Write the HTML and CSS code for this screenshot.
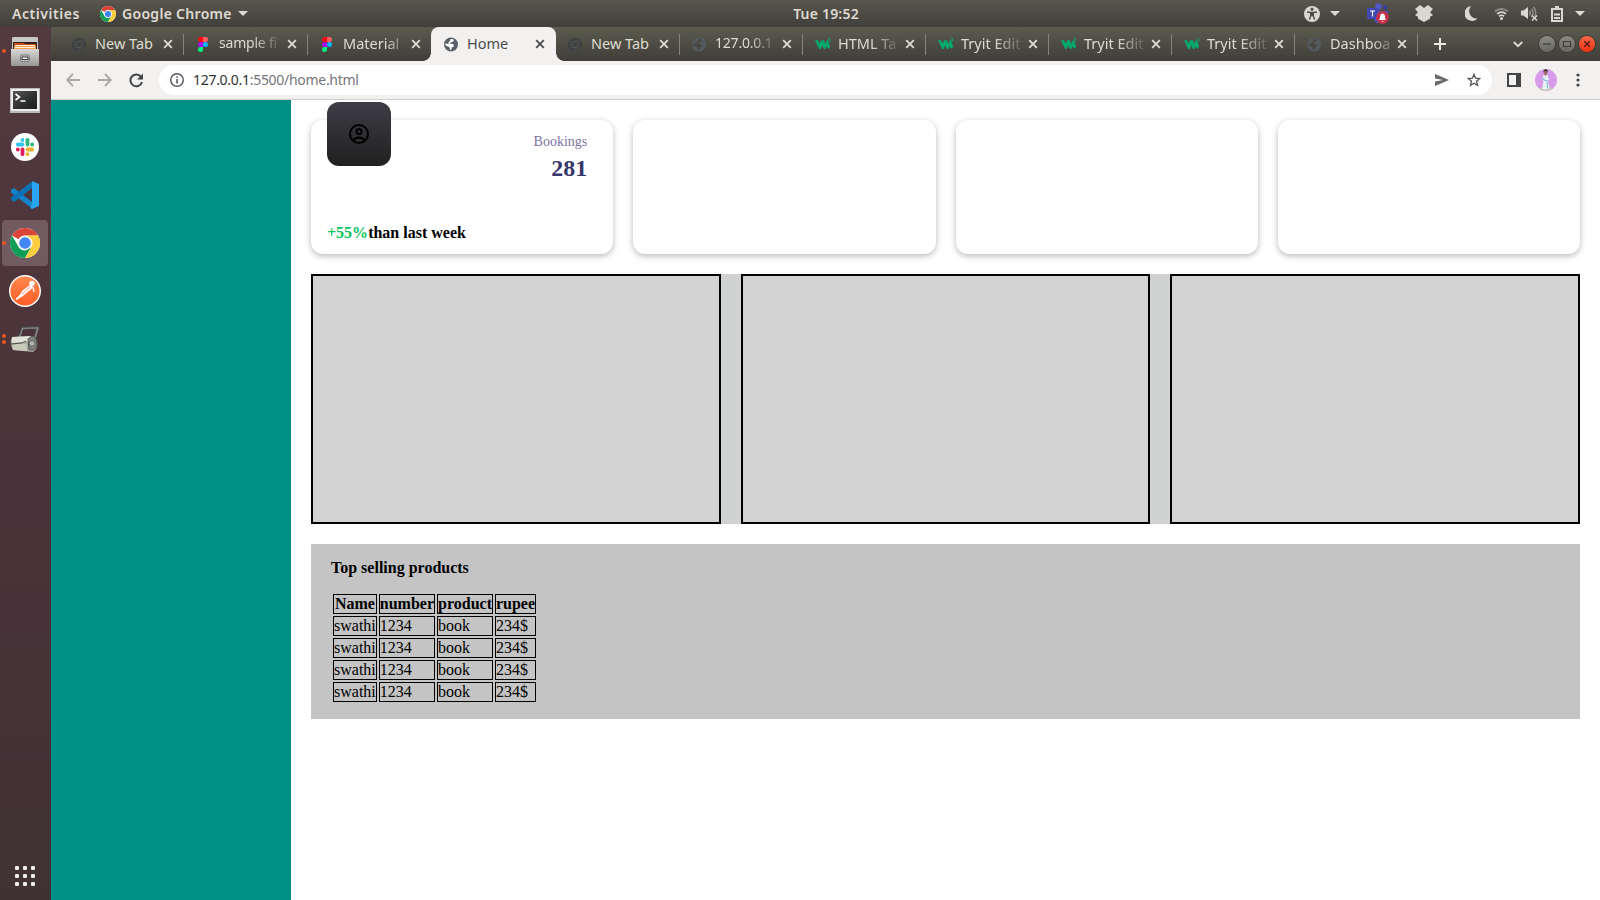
FILE: index.html
```html
<!DOCTYPE html>
<html lang="en">
<head>
<meta charset="utf-8">
<title>Home</title>
<link rel="stylesheet" href="styles.css">
</head>
<body>
<svg class="defs" aria-hidden="true">
  <defs>
    <linearGradient id="metal" x1="0" y1="0" x2="0" y2="1"><stop offset="0" stop-color="#d8d8d6"/><stop offset="1" stop-color="#969694"/></linearGradient>
    <linearGradient id="screen" x1="0" y1="0" x2="1" y2="1"><stop offset="0" stop-color="#555"/><stop offset=".6" stop-color="#2c2e2e"/><stop offset="1" stop-color="#1d1f1f"/></linearGradient>
    <linearGradient id="orange" x1="0" y1="0" x2="0" y2="1"><stop offset="0" stop-color="#ff8a50"/><stop offset="1" stop-color="#ff5c26"/></linearGradient>
  </defs>
  <symbol id="chrome" viewBox="0 0 48 48">
    <circle cx="24" cy="24" r="24" fill="#fff"/>
    <path fill="#db4437" d="M24 0A24 24 0 0 1 44.8 12H24A12 12 0 0 0 13.6 18L3.2 12A24 24 0 0 1 24 0Z"/>
    <path fill="#0f9d58" d="M3.2 12L13.6 30A12 12 0 0 0 24 36L34.4 30L24 48A24 24 0 0 1 3.2 12Z"/>
    <path fill="#ffcd40" d="M44.8 12A24 24 0 0 1 24 48L34.4 30A12 12 0 0 0 34.4 18L24 12Z"/>
    <circle cx="24" cy="24" r="11.5" fill="#f1f1f1"/><circle cx="24" cy="24" r="9.2" fill="#4285f4"/>
  </symbol>
  <symbol id="chrome-dim" viewBox="0 0 14 14">
    <circle cx="7" cy="7" r="7" fill="#3f4244"/>
    <path d="M7 3.8h6M4.2 8.6L1.3 3.5M9.8 8.6L7 13.6" stroke="#53534b" stroke-width=".9"/><circle cx="7" cy="7" r="3.2" fill="#3f4244" stroke="#55554c" stroke-width="1"/>
  </symbol>
  <symbol id="figma" viewBox="0 0 10 15">
    <path fill="#ff0a12" d="M5 0H2.5a2.5 2.5 0 0 0 0 5H5z"/><path fill="#ff5d63" d="M5 0h2.5a2.5 2.5 0 0 1 0 5H5z"/>
    <path fill="#a50cff" d="M5 5H2.5a2.5 2.5 0 0 0 0 5H5z"/><circle cx="7.5" cy="7.5" r="2.5" fill="#00b6ff"/><path fill="#00f27c" d="M5 10H2.5A2.5 2.5 0 1 0 5 12.500z"/>
  </symbol>
  <symbol id="globe" viewBox="0 0 14 14">
    <circle cx="7" cy="7" r="7" fill="currentColor"/>
    <path class="land" d="M6.500 1.500L9.500 1.800L9.800 3.300L8 4.800L6.200 5L6.200 6.300L8.800 6.400L10 7.800L9.300 9.400L7.700 9.800L7.500 12L5.600 12.400L6 10.600L4.500 9.200L1.400 7.700L1.300 6L4.600 6.600L4.500 4.600L6 3.600Z"/>
  </symbol>
  <symbol id="w3" viewBox="0 0 17 12">
    <path d="M0 2.200h3l1.500 3.600L6.200 2.200h2.600l1.500 3.600L12 2.200h1.500l-.4 2.300c1.200.7 1.200 2.400 2 3.300l-.8 2.800c-1.400 0-2.300-.9-2.700-2.300L10.400 11H9L7.300 7.500 5.600 11H4.200z" fill="#04aa6d"/>
    <path d="M12.800.7h2.300L13.800 2.200c1.700.1 1.500 2.300-.9 1.900" fill="none" stroke="#04aa6d" stroke-width=".8"/>
  </symbol>
  <symbol id="close" viewBox="0 0 10 10"><path d="M1.200 1.200L8.800 8.800M8.800 1.200L1.200 8.800" stroke="currentColor" stroke-width="1.800"/></symbol>
  <symbol id="caret" viewBox="0 0 10 5"><path d="M0 0h10L5 5z" fill="currentColor"/></symbol>
</svg>

<header class="topbar">
  <span class="activities">Activities</span>
  <svg class="app-logo"><use href="#chrome"/></svg>
  <span class="app-name">Google Chrome</span>
  <svg class="caret"><use href="#caret"/></svg>
  <span class="clock">Tue 19:52</span>
  <div class="tray">
    <svg width="16" height="16" viewBox="0 0 16 16"><circle cx="8" cy="8" r="8" fill="#dad7d1"/><circle cx="8" cy="3.200" r="1.500" fill="#4a4943"/><path d="M3 6l3.500.5h3L13 6M6.800 7v3L5.300 13.500M9.200 7v3l1.500 3.500" fill="none" stroke="#4a4943" stroke-width="1.300"/><path d="M6.300 6h3.400v4H6.300z" fill="#4a4943"/></svg>
    <svg class="caret c1"><use href="#caret"/></svg>
    <svg class="teams" width="22" height="21" viewBox="0 0 22 21"><circle cx="11.500" cy="3.500" r="3.300" fill="#5059c9"/><circle cx="18.300" cy="4.500" r="2.300" fill="#353f9e"/><path d="M6 8h15v6l-5 6H9l-3-5z" fill="#4952bd"/><rect y="5" width="11" height="11" rx="1" fill="#4048b4"/><path d="M3 8h5M5.500 8v5.500" stroke="#fff" stroke-width="1.200"/><circle cx="15.500" cy="14.500" r="6.500" fill="#c4314b"/><path d="M12 17c1.300-1.400.8-3.500 1.300-4.800a2.300 2.300 0 0 1 4.400 0c.5 1.300 0 3.400 1.300 4.800zM14.300 18h2.400l-1.200 1z" fill="#fff"/></svg>
    <svg class="dropbox" width="18" height="17" viewBox="0 0 18 17"><path fill="#dad7d1" d="M5 0L9 3l4-3 5 4-3 3.300 3 3-3 1.500v2L9 17l-6-3.200v-2L0 10.300l3-3L0 4z"/></svg>
    <svg class="moon" width="13" height="15" viewBox="0 0 13 15"><path fill="#dad7d1" d="M6 0a7.500 7.500 0 1 0 6.500 12.500A7.600 7.600 0 0 1 6 0z"/></svg>
    <svg class="wifi" width="15" height="13" viewBox="0 0 15 13"><path d="M1 4.500a9.500 9.500 0 0 1 13 0" fill="none" stroke="#8e8b85" stroke-width="1.900"/><path d="M3 7a6.500 6.500 0 0 1 9 0M5 9.300a3.500 3.500 0 0 1 5 0" fill="none" stroke="#dad7d1" stroke-width="1.700"/><circle cx="7.500" cy="11.500" r="1.500" fill="#dad7d1"/></svg>
    <svg class="sound" width="17" height="15" viewBox="0 0 17 15"><path d="M0 4.500h2.500L7 1v12L2.500 9.500H0z" fill="#dad7d1"/><path d="M8.500 4.500q1.500 2.500 0 5M10.500 3q3 4 0 8M12.500 1q3.500 4.500 1.500 9" fill="none" stroke="#918e88" stroke-width="1.500"/><path d="M11 9.500l5 5M16 9.500l-5 5" stroke="#dad7d1" stroke-width="1.600"/></svg>
    <svg class="battery" width="12" height="16" viewBox="0 0 12 16"><path d="M4 0h4v2h4v14H0V2h4z" fill="#dad7d1"/><path d="M2 4h8v10H2z" fill="#4a4943"/><path d="M3 8.500h6M3 12h6" stroke="#dad7d1" stroke-width="1.800"/></svg>
    <svg class="caret c2"><use href="#caret"/></svg>
  </div>
</header>

<div class="desktop">
  <nav class="dock">
    <div class="app"><i class="dots"><b></b></i>
      <svg width="28" height="29" viewBox="0 0 28 29"><path d="M1 1q0-1 2-1h22q2 0 2 1v12H1z" fill="#c8c8c6"/><path d="M2 5h24v8H2z" fill="#30201c"/><path d="M3 6h10l1 1h11v6H3z" fill="#c94e19"/><path d="M3 9h22v4H3z" fill="#f5a04e"/><path d="M4 8.500h20M4 10.500h20" stroke="#fff1d8"/><path d="M0 12h28v16q0 1-1 1H1q-1 0-1-1z" fill="url(#metal)"/><rect x="9.500" y="18" width="9" height="6.500" rx="1.500" fill="#ccc" stroke="#777"/><rect x="11" y="20" width="6" height="2.500" fill="#fff" stroke="#333"/></svg></div>
    <div class="app terminal">
      <svg width="30" height="25" viewBox="0 0 30 25"><path d="M0 0h30v25H0z" fill="#b9bab8"/><path d="M1 1h28v22H1z" fill="#eeeeec"/><path d="M3 3h24v18H3z" fill="url(#screen)"/><path d="M5.500 6l4 3-4 3M10.500 13h5" fill="none" stroke="#fff" stroke-width="1.600"/></svg></div>
    <div class="app">
      <svg width="28" height="28" viewBox="0 0 28 28"><circle cx="14" cy="14" r="14" fill="#fff"/><g stroke-width="3.800" stroke-linecap="round"><path d="M6.800 11.500h4.700M11.500 6.900v.1" stroke="#36c5f0"/><path d="M16.500 6.800v4.700M21.100 11.500h.1" stroke="#2eb67d"/><path d="M16.500 16.500h4.700M16.500 21.100v.1" stroke="#ecb22e"/><path d="M11.500 16.500v4.700M6.800 16.500h.1" stroke="#e01e5a"/></g></svg></div>
    <div class="app">
      <svg width="28" height="28" viewBox="0 0 28 28"><path d="M0 9l3-2 18 14v6.500L0 11.500z" fill="#1283c8"/><path d="M0 19l3 2L21 7V.5L0 16.500z" fill="#0d72b5"/><path d="M21 0l7 3v22l-7 3-1.500-1L21 21V7z" fill="#2aa5f3"/></svg></div>
    <div class="app"><span class="tile"></span><i class="dots"><b></b></i><svg width="30" height="30"><use href="#chrome"/></svg></div>
    <div class="app">
      <svg width="32" height="32" viewBox="0 0 32 32"><circle cx="16" cy="16" r="15.300" fill="url(#orange)" stroke="#fff" stroke-width="1.400"/><circle cx="23" cy="8.500" r="2.700" fill="#fff"/><path d="M22 10L14 16l-2.500 4L7 24.500l6-3.500 4-3.500 6-5zM24 12l1 5" fill="#fff" stroke="#fff" stroke-width="1.300"/><path d="M21 12l-8 7" stroke="#ff7340" stroke-width=".8"/></svg></div>
    <div class="app"><i class="dots"><b></b><b></b></i>
      <svg width="30" height="27" viewBox="0 0 30 27"><path d="M9 12L12.500 2L28 1.500L24 15" fill="none" stroke="#85898a" stroke-width="1.800"/><path d="M8 12L11.500 1.200L29 .7" fill="none" stroke="#3c403d" stroke-width="1"/><path d="M2 11l22-1q5 6 2 13l-3 3-20-2q-4-7-1-13z" fill="#a5a79f"/><path d="M2 11l19-1 2 5-21 2z" fill="#e2e3d7"/><path d="M2 19l11-2 4 2v6L3 24z" fill="#c9cbb9"/><path d="M1 18l11-1 4-2" fill="none" stroke="#4d504b"/><path d="M18 13q2-3 6-2.500 4 4 3 9-3 6-8 4z" fill="#80837e" stroke="#555"/><circle cx="22" cy="17.500" r="2.800" fill="#b4b6b1" stroke="#666"/></svg></div>
    <div class="all-apps"><b></b><b></b><b></b><b></b><b></b><b></b><b></b><b></b><b></b></div>
  </nav>

  <div class="browser">
    <div class="tabs">
      <div class="tab"><svg class="fav"><use href="#chrome-dim"/></svg><span class="label">New Tab</span><svg class="x"><use href="#close"/></svg></div>
      <div class="tab"><svg class="fav"><use href="#figma"/></svg><span class="label fade tight">sample fi</span><svg class="x"><use href="#close"/></svg></div>
      <div class="tab last"><svg class="fav"><use href="#figma"/></svg><span class="label fade soft">Material</span><svg class="x"><use href="#close"/></svg></div>
      <div class="tab active"><svg class="fav"><use href="#globe"/></svg><span class="label">Home</span><svg class="x"><use href="#close"/></svg></div>
      <div class="tab"><svg class="fav"><use href="#chrome-dim"/></svg><span class="label">New Tab</span><svg class="x"><use href="#close"/></svg></div>
      <div class="tab narrow"><svg class="fav dim"><use href="#globe"/></svg><span class="label fade tight">127.0.0.1</span><svg class="x"><use href="#close"/></svg></div>
      <div class="tab narrow"><svg class="fav w3"><use href="#w3"/></svg><span class="label fade">HTML Ta</span><svg class="x"><use href="#close"/></svg></div>
      <div class="tab narrow"><svg class="fav w3"><use href="#w3"/></svg><span class="label fade">Tryit Edit</span><svg class="x"><use href="#close"/></svg></div>
      <div class="tab narrow"><svg class="fav w3"><use href="#w3"/></svg><span class="label fade">Tryit Edit</span><svg class="x"><use href="#close"/></svg></div>
      <div class="tab narrow"><svg class="fav w3"><use href="#w3"/></svg><span class="label fade">Tryit Edit</span><svg class="x"><use href="#close"/></svg></div>
      <div class="tab narrow"><svg class="fav dim"><use href="#globe"/></svg><span class="label fade soft">Dashboa</span><svg class="x"><use href="#close"/></svg></div>
      <svg class="plus" width="12" height="12" viewBox="0 0 12 12"><path d="M6 0v12M0 6h12" stroke="#e8e7e0" stroke-width="2"/></svg>
      <div class="window-controls">
        <svg width="10" height="7" viewBox="0 0 10 7"><path d="M.8 1L5 5.200 9.200 1" fill="none" stroke="#dfdbd2" stroke-width="1.800"/></svg>
        <span class="win first"><svg viewBox="0 0 16 16"><path d="M4 8h8" stroke="#3c3b37" stroke-width="1.200"/></svg></span>
        <span class="win"><svg viewBox="0 0 16 16"><path d="M4.500 5.500h7v5h-7z" fill="none" stroke="#3c3b37" stroke-width="1.200"/></svg></span>
        <span class="win red"><svg viewBox="0 0 16 16"><path d="M5.200 5.200l5.600 5.600M10.800 5.200l-5.600 5.600" stroke="#4a1a10" stroke-width="1.300"/></svg></span>
      </div>
    </div>

    <div class="toolbar">
      <svg width="14" height="14" viewBox="0 0 14 14"><path d="M14 7H1.500M7 1L1.200 7 7 13" fill="none" stroke="#a9a8a6" stroke-width="1.800"/></svg>
      <svg class="fwd" width="14" height="14" viewBox="0 0 14 14"><path d="M0 7h12.500M7 1l5.800 6L7 13" fill="none" stroke="#a9a8a6" stroke-width="1.800"/></svg>
      <svg class="reload" width="15" height="15" viewBox="0 0 15 15"><path d="M12.300 4.200A5.900 5.900 0 1 0 13 9" fill="none" stroke="#444" stroke-width="2"/><path d="M14 .5v6H8z" fill="#444"/></svg>
      <div class="omnibox">
        <svg width="14" height="14" viewBox="0 0 14 14"><circle cx="7" cy="7" r="6.300" fill="none" stroke="#55585c" stroke-width="1.400"/><path d="M7 6v4.500M7 3.200v1.600" stroke="#55585c" stroke-width="1.600"/></svg>
        <span class="url"><span class="host">127.0.0.1</span>:5500/home.html</span>
        <svg class="send" width="14" height="12" viewBox="0 0 14 12"><path d="M0 0l14 6-14 6V7.500L8 6 0 4.500z" fill="#66686b"/></svg>
        <svg class="star" width="14" height="14" viewBox="0 0 14 14"><path d="M7 1.500l1.600 3.700 4 .4-3 2.700.9 4L7 10.200l-3.500 2.100.9-4-3-2.700 4-.4z" fill="none" stroke="#55585c" stroke-width="1.400"/></svg>
      </div>
      <svg class="side" width="14" height="14" viewBox="0 0 14 14"><path d="M1 1h12v12H1z" fill="none" stroke="#444" stroke-width="2"/><path d="M9 1h4v12H9z" fill="#444"/></svg>
      <svg class="avatar" width="22" height="22" viewBox="0 0 22 22"><circle cx="11" cy="11" r="11" fill="#d79bea"/><path d="M4 19.500q7-4 14 0-7 5-14 0z" fill="#c9bfae"/><path d="M8.500 6l-1 5 1 1-1.500 8q4 1.500 8 0L13 12l1-2-1.500-4z" fill="#e5f1f6"/><path d="M8 9l1 2 4 1M12 13l1 7" stroke="#7bb2c9" fill="none"/><path d="M9.500 4h2v2.500h-2z" fill="#9b675c"/><circle cx="10.500" cy="3" r="1.700" fill="#9b675c"/><path d="M8.500 4q-.5-3.800 2.300-3.800T12.500 4l-.6-2H9.500z" fill="#332"/></svg>
      <svg class="menu" width="4" height="14" viewBox="0 0 4 14"><g fill="#444"><circle cx="2" cy="2" r="1.600"/><circle cx="2" cy="7" r="1.600"/><circle cx="2" cy="12" r="1.600"/></g></svg>
    </div>

    <div class="page">
      <aside class="sidebar"></aside>
      <main class="content">
        <section class="cards">
          <article class="card">
            <div class="badge"><svg width="24" height="24" viewBox="0 0 24 24" fill="none" stroke="#000" stroke-width="2"><circle cx="12" cy="12" r="9"/><circle cx="12" cy="9.500" r="2.500"/><path d="M6 18.500q2.500-3 6-3t6 3"/></svg></div>
            <div class="stat"><span class="stat-name">Bookings</span><span class="stat-value">281</span></div>
            <p class="trend"><span class="up">+55%</span>than last week</p>
          </article>
          <article class="card"></article>
          <article class="card"></article>
          <article class="card"></article>
        </section>
        <section class="panels"><div class="panel"></div><div class="panel"></div><div class="panel"></div></section>
        <section class="products">
          <h4>Top selling products</h4>
          <table>
            <tr><th>Name</th><th>number</th><th>product</th><th>rupee</th></tr>
            <tr><td>swathi</td><td>1234</td><td>book</td><td>234$</td></tr>
            <tr><td>swathi</td><td>1234</td><td>book</td><td>234$</td></tr>
            <tr><td>swathi</td><td>1234</td><td>book</td><td>234$</td></tr>
            <tr><td>swathi</td><td>1234</td><td>book</td><td>234$</td></tr>
          </table>
        </section>
      </main>
    </div>
  </div>
</div>
</body>
</html>
```

FILE: styles.css
```css
* { box-sizing: border-box; }
body { margin: 0; width: 1600px; height: 900px; overflow: hidden; font-family: "Noto Sans", "Open Sans", sans-serif; background: #fff; }
svg { display: block; flex: none; }
.defs { position: absolute; width: 0; height: 0; }

.topbar { position: relative; height: 27px; display: flex; align-items: center; padding-left: 12px; background: linear-gradient(#5a564e, #403f3a); color: #dfdbd2; font-size: 14px; font-weight: 600; white-space: nowrap; }
.topbar span { line-height: 19px; padding-bottom: 1px; }
.activities { width: 88px; letter-spacing: .55px; }
.app-logo { width: 16px; height: 16px; }
.app-name { width: 110px; margin-left: 6px; letter-spacing: .3px; }
.caret { width: 10px; height: 5px; color: #dfdbd2; margin-left: 6px; }
.clock { position: absolute; left: 0; right: 0; padding-left: 52px; text-align: center; letter-spacing: .2px; }
.tray { margin-left: auto; display: flex; align-items: center; padding-right: 15px; }
.tray .c1 { margin-left: 10px; }
.teams { margin-left: 27px; }
.dropbox { margin-left: 26px; }
.moon { margin-left: 32px; }
.wifi { margin-left: 16px; }
.sound { margin-left: 12px; }
.battery { margin-left: 13px; }
.tray .c2 { margin-left: 12px; }

.desktop { display: flex; height: 873px; }
.dock { width: 51px; display: flex; flex-direction: column; background: linear-gradient(#533940, #4b333a 45%, #3f3134); }
.app { position: relative; height: 48px; display: flex; align-items: center; justify-content: center; padding-right: 1px; }
.app.terminal { padding-top: 2px; }
.app svg { position: relative; }
.tile { position: absolute; left: 2px; top: 1px; width: 46px; height: 46px; border-radius: 4px; background: #715b61; }
.dots { position: absolute; left: 2px; top: 0; height: 48px; display: flex; flex-direction: column; justify-content: center; gap: 2px; }
.dots b { width: 4px; height: 4px; border-radius: 50%; background: #e95420; }
.all-apps { margin: auto 0 14px 15px; display: grid; grid-template-columns: repeat(3, 4px); gap: 4px; }
.all-apps b { width: 4px; height: 4px; border-radius: 1px; background: #eeeceb; }

.browser { flex: 1; min-width: 0; display: flex; flex-direction: column; }
.tabs { height: 34px; display: flex; align-items: center; padding-left: 9px; background: linear-gradient(#5c5b4e, #3f3e39); }
.tab { position: relative; width: 124px; height: 34px; display: flex; align-items: center; padding-left: 12px; color: #dfdcd0; }
.tab.narrow { width: 123px; }
.tab::after { content: ""; width: 1px; height: 21px; margin-left: auto; background: #85837a; }
.tab.last::after, .tab.active::after { visibility: hidden; }
.fav { width: 14px; height: 15px; }
.fav.w3 { width: 17px; height: 12px; margin-right: -3px; }
.fav.dim { color: #555a61; }
.land { fill: var(--land, #47473f); }
.label { width: 60px; margin-left: 9px; padding-bottom: 2px; font-size: 14.500px; line-height: 20px; white-space: nowrap; overflow: hidden; }
.tight { font-size: 14px; letter-spacing: -.2px; }
.fade { -webkit-mask-image: linear-gradient(90deg, #000 55%, rgba(0, 0, 0, .15)); mask-image: linear-gradient(90deg, #000 55%, rgba(0, 0, 0, .15)); }
.soft { -webkit-mask-image: linear-gradient(90deg, #000 70%, rgba(0, 0, 0, .3)); mask-image: linear-gradient(90deg, #000 70%, rgba(0, 0, 0, .3)); }
.x { width: 10px; height: 10px; margin-left: 8px; }
.narrow .x { margin-left: 7px; }
.active { width: 125px; margin-left: -1px; padding-left: 13px; background: #f2f1f0; border-radius: 8px 8px 0 0; color: #4c4c4c; }
.active .fav { color: #5a5f6b; --land: #fff; }
.active::before { content: ""; position: absolute; left: -8px; right: -8px; bottom: 0; height: 8px; background: radial-gradient(circle at 0 0, transparent 7.500px, #f2f1f0 8px) left / 8px 8px no-repeat, radial-gradient(circle at 100% 0, transparent 7.500px, #f2f1f0 8px) right / 8px 8px no-repeat; }
.plus { margin-left: 16px; }
.window-controls { margin-left: auto; display: flex; align-items: center; padding-right: 5px; gap: 4px; }
.win { width: 16px; height: 16px; border-radius: 50%; background: linear-gradient(#8b8a82, #696860); box-shadow: 0 0 0 1px #3b3a35; }
.win.first { margin-left: 12px; }
.win.red { background: linear-gradient(#f7694c, #ee2f12); }

.toolbar { height: 39px; display: flex; align-items: center; padding-left: 15px; background: #f2f1f0; border-bottom: 1px solid #cfcecb; }
.fwd { margin-left: 18px; }
.reload { margin-left: 17px; }
.omnibox { display: flex; align-items: center; width: 1333px; height: 30px; margin-left: 15px; padding-left: 11px; border-radius: 15px; background: #fff; }
.url { margin-left: 9px; font-size: 14px; line-height: 20px; letter-spacing: -.29px; color: #75757b; white-space: nowrap; }
.host { color: #333; }
.send { margin-left: auto; }
.star { margin: 0 11px 0 18px; }
.side { margin-left: 15px; }
.avatar { margin-left: 14px; }
.menu { margin-left: 19px; }

.page { flex: 1; display: flex; font-family: "Liberation Serif", serif; font-size: 16px; line-height: 18px; }
.sidebar { width: 240px; background: #009087; }
.content { flex: 1; display: flex; flex-direction: column; gap: 20px; padding: 20px; }
.cards { display: grid; grid-template-columns: repeat(4, 1fr); gap: 20px; }
.card { position: relative; height: 134px; padding: 13px 26px 12px 16px; display: flex; flex-direction: column; justify-content: space-between; border-radius: 12px; background: #fff; box-shadow: 0 2px 6px rgba(0, 0, 0, .28); }
.badge { position: absolute; left: 16px; top: -18px; width: 64px; height: 64px; border-radius: 12px; display: grid; place-items: center; background: linear-gradient(#3e3d45, #202020); }
.stat { display: flex; flex-direction: column; align-items: flex-end; }
.stat-name { font-size: 14px; line-height: 18px; color: #7b73a2; }
.stat-value { margin-top: 4px; font-size: 24px; line-height: 27px; font-weight: bold; color: #37386a; }
.trend { margin: 0; font-weight: bold; }
.up { color: #0bc45a; }
.panels { display: grid; grid-template-columns: repeat(3, 1fr); gap: 20px; background: #d1d3d3; }
.panel { height: 250px; border: 2px solid #000; background: #d3d3d3; }
.products { height: 175px; padding: 15px 20px; background: #c4c4c4; }
.products h4 { margin: 0 0 15px; font-size: 16px; line-height: 18px; }
table { border-spacing: 2px; }
th, td { height: 20px; padding: 0; border: 1px solid #000; line-height: 18px; }
```
